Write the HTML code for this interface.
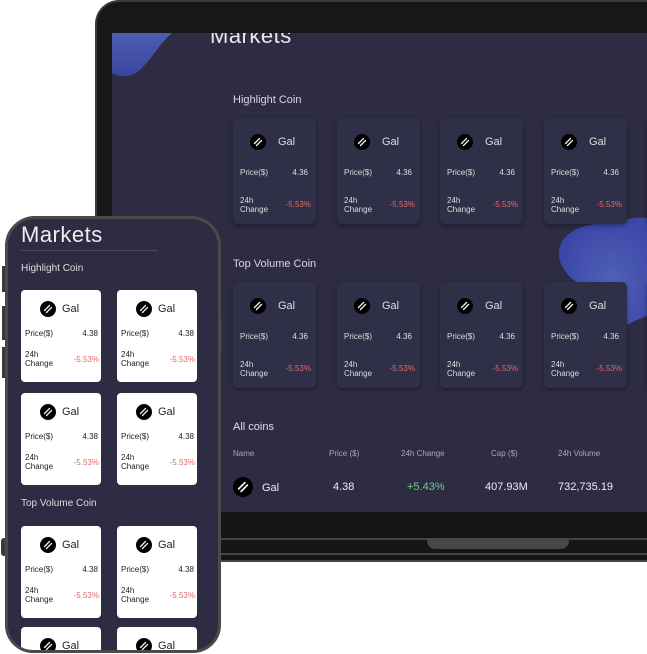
<!DOCTYPE html>
<html><head><meta charset="utf-8"><style>
*{margin:0;padding:0;box-sizing:border-box}
html,body{width:647px;height:654px;overflow:hidden}
body{background:#fff;position:relative;font-family:"Liberation Sans",sans-serif}
.a{position:absolute}
.lap{left:95px;top:0;width:552px;height:512px;background:#171717;border-radius:24px 0 0 0;border:2px solid #3a3a3a;border-right:none;border-bottom:none}
.scr{left:112px;top:33px;width:535px;height:479px;background:#2d2c43;overflow:hidden}
.base1{left:112px;top:512px;width:535px;height:26px;background:#151515}
.base2{left:95px;top:538px;width:552px;height:24px;background:#161616;border-top:2px solid #444;border-bottom:2px solid #444}
.base2 .ln{position:absolute;left:0;right:0;top:13px;height:2px;background:#444}
.notch{left:427px;top:538px;width:142px;height:11px;background:#474747;border-radius:0 0 8px 8px}
.lc{width:83px;height:106px;background:#302f48;border-radius:5px;box-shadow:0 2px 5px rgba(0,0,0,.35);color:#ddd}
.ic{position:absolute;width:16px;height:16px}
.nm{position:absolute;font-size:11px}
.pl{position:absolute;font-size:8px;line-height:9px}
.red{color:#e06a6a}
.ph{left:5px;top:216px;width:216px;height:437px;background:#2d2c43;border:3px solid #4a4a4a;border-radius:30px 30px 28px 28px;overflow:hidden}
.pc{width:80px;height:92px;background:#fff;border-radius:4px;color:#222}
.btn{background:#3a3a3a;width:3px;left:2px}
</style></head><body>
<div class="a lap"></div>
<div class="a scr" id="scr">
  <svg class="a" style="left:0;top:0" width="70" height="50"><defs><linearGradient id="g" x1="0" y1="0" x2="0" y2="1"><stop offset="0" stop-color="#4a5fb0"/><stop offset="1" stop-color="#3c45a0"/></linearGradient></defs><path d="M0 0 H60 C48 10 40 25 30 35 C20 45 8 45 0 40 Z" fill="url(#g)"/></svg>
  <svg class="a" style="left:440px;top:183px" width="100" height="110"><defs><radialGradient id="g2" cx=".6" cy=".6" r=".6"><stop offset="0" stop-color="#4f62b8"/><stop offset="1" stop-color="#3d47a8"/></radialGradient></defs><path d="M10 50 C0 30 15 10 45 8 C70 6 80 0 95 2 L95 100 C80 105 75 110 70 110 L70 85 C50 80 20 70 10 50Z" fill="url(#g2)"/></svg>
  <div class="a" style="left:98px;top:-10px;font-size:22px;color:#e8e8ee;letter-spacing:.5px">Markets</div>
  <div class="a" style="left:121px;top:61px;font-size:11px;color:#d8d8e0">Highlight Coin</div>
  <div class="a" style="left:121px;top:225px;font-size:11px;color:#d8d8e0">Top Volume Coin</div>
  <div class="a" style="left:121px;top:388px;font-size:11px;color:#e0e0e8">All coins</div>
  <div class="a" style="left:121px;top:416px;font-size:8px;color:#aaa;width:420px">
    <span class="a" style="left:0">Name</span><span class="a" style="left:96px">Price ($)</span><span class="a" style="left:168px">24h Change</span><span class="a" style="left:258px">Cap ($)</span><span class="a" style="left:325px">24h Volume</span></div>
  <svg class="a" style="left:121px;top:444px" width="20" height="20" viewBox="0 0 16 16"><circle cx="8" cy="8" r="8" fill="#000"/><path d="M4.5 9.5 L9.5 4.5 M6.5 11.5 L11.5 6.5" stroke="#fff" stroke-width="1.3" stroke-linecap="round" stroke-dasharray="2.2 0.9"/></svg>
  <div class="a" style="left:150px;top:449px;font-size:11px;color:#eee">Gal</div>
  <div class="a" style="left:221px;top:448px;font-size:11px;color:#eee">4.38</div>
  <div class="a" style="left:295px;top:448px;font-size:11px;color:#6fce8e">+5.43%</div>
  <div class="a" style="left:373px;top:448px;font-size:11px;color:#eee">407.93M</div>
  <div class="a" style="left:446px;top:448px;font-size:11px;color:#eee">732,735.19</div>
</div>
<div class="a base1"></div>
<div class="a base2"><div class="ln"></div></div>
<div class="a notch"></div>

<div class="a btn" style="top:266px;height:26px"></div>
<div class="a btn" style="top:306px;height:34px"></div>
<div class="a btn" style="top:347px;height:31px"></div>
<div class="a btn" style="top:538px;height:18px;width:4px;left:1px;border-radius:3px 0 0 3px"></div>
<div class="a" style="left:219px;top:318px;width:3px;height:34px;background:#3a3a3a"></div>
<div class="a ph" id="ph">
  <div class="a" style="left:13px;top:3px;font-size:22px;color:#eee;letter-spacing:.5px">Markets</div>
  <div class="a" style="left:13px;top:31px;width:137px;height:1px;background:#4a4a60"></div>
  <div class="a" style="left:13px;top:44px;font-size:10px;color:#ddd">Highlight Coin</div>
  <div class="a" style="left:13px;top:279px;font-size:10px;color:#ddd">Top Volume Coin</div>
</div>
<script>
var ICON='<svg viewBox="0 0 16 16" width="16" height="16"><circle cx="8" cy="8" r="8" fill="#000"/><path d="M4.5 9.5 L9.5 4.5 M6.5 11.5 L11.5 6.5" stroke="#fff" stroke-width="1.3" stroke-linecap="round" stroke-dasharray="2.2 0.9"/></svg>';
function card(cls,x,y,pr){
 var L=cls=='lc';
 return '<div class="a '+cls+'" style="left:'+x+'px;top:'+y+'px">'+
 '<div class="ic" style="left:'+(L?17:19)+'px;top:'+(L?16:11)+'px">'+ICON+'</div>'+
 '<div class="nm" style="left:'+(L?45:41)+'px;top:'+(L?18:13)+'px">Gal</div>'+
 '<div class="pl" style="left:'+(L?7:4)+'px;top:'+(L?50:39)+'px">Price($)</div>'+
 '<div class="pl" style="right:'+(L?8:3)+'px;top:'+(L?50:39)+'px">'+pr+'</div>'+
 '<div class="pl" style="left:'+(L?7:4)+'px;top:'+(L?78:60)+'px">24h<br>Change</div>'+
 '<div class="pl red" style="right:'+(L?5:2)+'px;top:'+(L?82:65)+'px">-5.53%</div></div>';
}
var H='';
[118,282].forEach(function(y){[233,337,440,544,647].forEach(function(x){H+=card('lc',x-112,y-33,'4.36');});});
document.getElementById('scr').insertAdjacentHTML('beforeend',H);
var P='';
[290,393,526,627].forEach(function(y){[21,117].forEach(function(x){P+=card('pc',x-8,y-219,'4.38');});});
document.getElementById('ph').insertAdjacentHTML('beforeend',P);
</script>
</body></html>
